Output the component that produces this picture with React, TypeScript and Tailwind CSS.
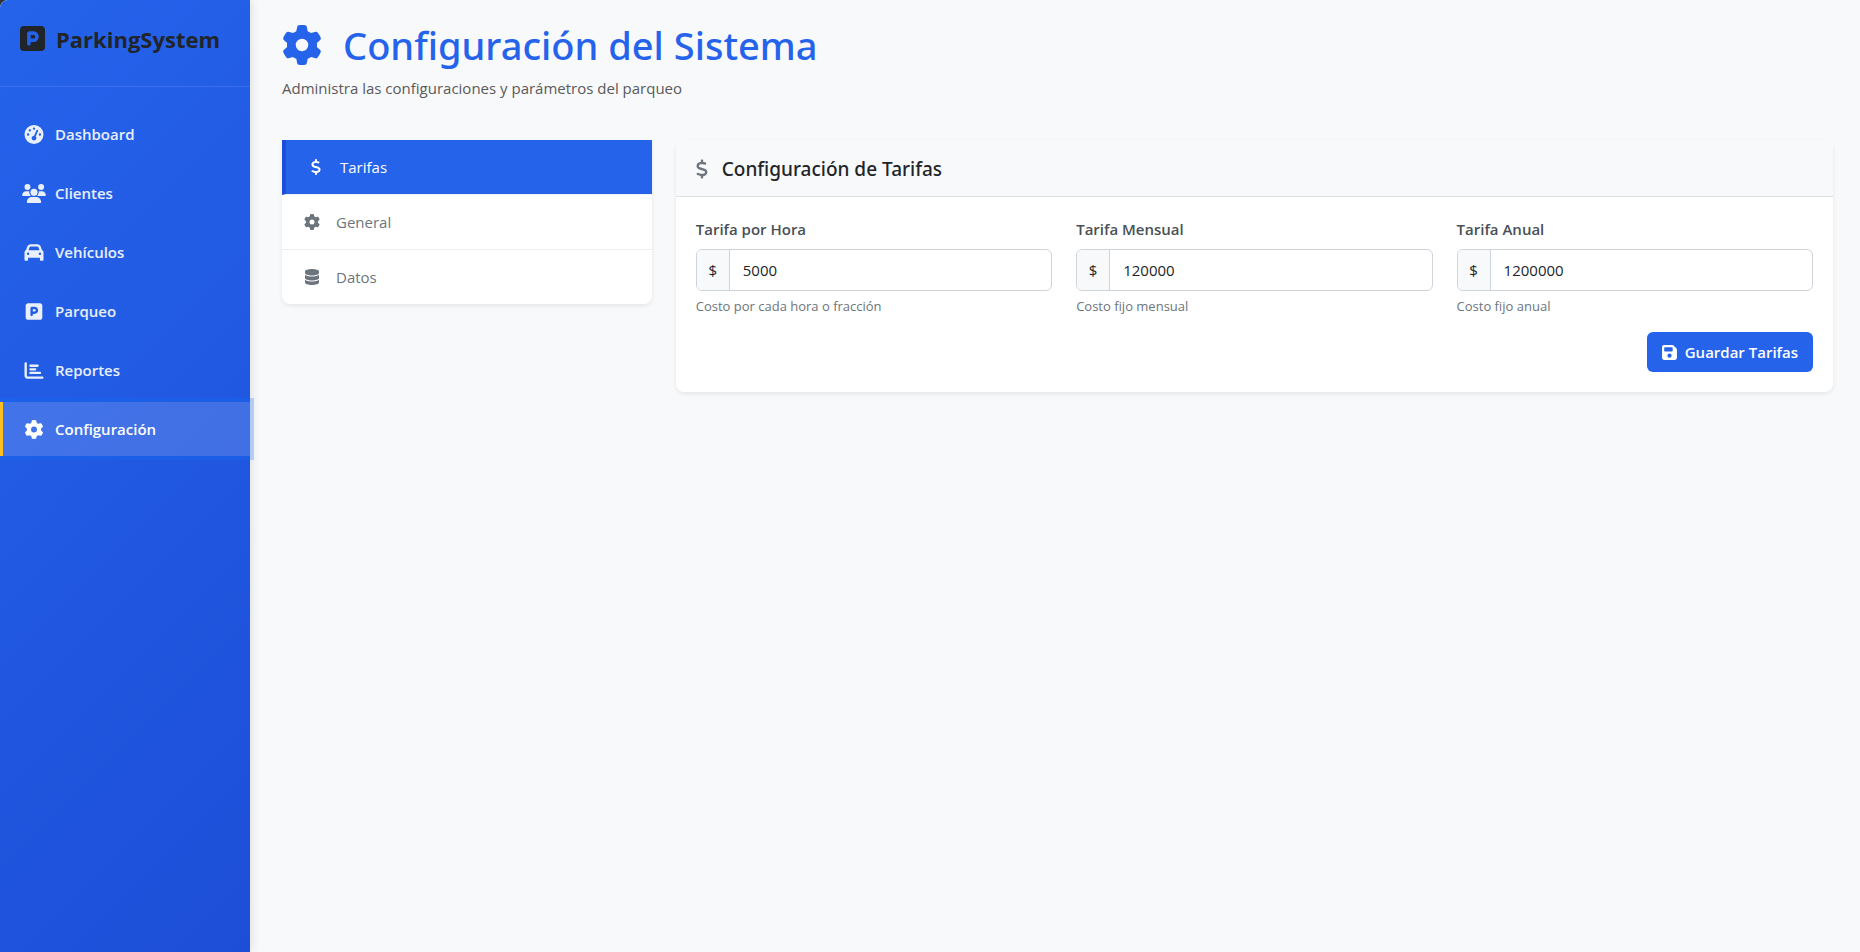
import React from "react";
import {
  FaCar,
  FaChartBar,
  FaDatabase,
  FaDollarSign,
  FaFloppyDisk,
  FaGaugeHigh,
  FaGear,
  FaSquareParking,
  FaUsers,
} from "react-icons/fa6";
import type { IconType } from "react-icons";

type NavItem = { label: string; icon: IconType; active?: boolean };

const navItems: NavItem[] = [
  { label: "Dashboard", icon: FaGaugeHigh },
  { label: "Clientes", icon: FaUsers },
  { label: "Vehículos", icon: FaCar },
  { label: "Parqueo", icon: FaSquareParking },
  { label: "Reportes", icon: FaChartBar },
  { label: "Configuración", icon: FaGear, active: true },
];

const sections: NavItem[] = [
  { label: "Tarifas", icon: FaDollarSign, active: true },
  { label: "General", icon: FaGear },
  { label: "Datos", icon: FaDatabase },
];

const rates = [
  { id: "hora", label: "Tarifa por Hora", value: "5000", help: "Costo por cada hora o fracción" },
  { id: "mensual", label: "Tarifa Mensual", value: "120000", help: "Costo fijo mensual" },
  { id: "anual", label: "Tarifa Anual", value: "1200000", help: "Costo fijo anual" },
];

function Sidebar() {
  return (
    <aside className="relative z-10 w-[250px] shrink-0 rounded-tl-lg bg-linear-[135deg,#2563eb,#1d4ed8] shadow-[2px_0_10px_rgba(0,0,0,0.1)]">
      <div className="flex h-[87px] items-start gap-[11px] border-b border-white/10 px-5 pt-6 text-[#212529]">
        <FaSquareParking className="h-[29px] w-[25px] shrink-0" aria-hidden="true" />
        <span className="text-[22px] leading-[30px] font-bold">ParkingSystem</span>
      </div>
      <nav className="flex flex-col gap-[5px] pt-5">
        {navItems.map(({ label, icon: Icon, active }) => (
          <a
            key={label}
            href="#"
            aria-current={active ? "page" : undefined}
            className={
              active
                ? "flex h-[54px] items-center gap-[9px] border-l-[3px] border-[#fbbf24] bg-white/15 pl-[18px] text-[15px] font-semibold text-white shadow-[0_0_0_4px_rgba(13,110,253,0.25)]"
                : "flex h-[54px] items-center gap-[9px] border-l-[3px] border-transparent pl-[18px] text-[15px] font-semibold text-white/90"
            }
          >
            <span className="flex w-[25px] shrink-0 justify-center">
              <Icon className="h-[19px] w-6" aria-hidden="true" />
            </span>
            {label}
          </a>
        ))}
      </nav>
    </aside>
  );
}

function SectionMenu() {
  return (
    <nav className="self-start rounded-b-lg bg-white shadow-[0_2px_4px_rgba(0,0,0,0.08)]">
      {sections.map(({ label, icon: Icon, active }) => (
        <a
          key={label}
          href="#"
          aria-current={active ? "true" : undefined}
          className={
            active
              ? "flex h-[55px] items-center gap-[14px] border-b border-l-4 border-b-[#f1f1f1] border-l-[#1d4ed8] bg-[#2563eb] bg-clip-padding pl-5 text-[15px] text-white"
              : "flex h-[55px] items-center gap-[14px] border-b border-[#eeeeee] pl-5 text-[15px] text-[#6c757d] last:h-[54px] last:border-b-0"
          }
        >
          <span className="flex w-5 shrink-0 justify-center">
            <Icon className="h-4 w-5" aria-hidden="true" />
          </span>
          {label}
        </a>
      ))}
    </nav>
  );
}

function RatesCard() {
  return (
    <section className="col-span-3 rounded-lg bg-white shadow-[0_2px_4px_rgba(0,0,0,0.08)]">
      <header className="flex h-[57px] items-center gap-[14px] rounded-t-lg border-b border-[#dee2e6] bg-[#f8f9fb] px-5 pt-0.5">
        <FaDollarSign className="h-5 w-3 shrink-0 text-[#6c757d]" aria-hidden="true" />
        <h2 className="font-['Noto_Sans','Open_Sans',sans-serif] text-[19px] leading-6 font-medium text-[#212529]">
          Configuración de Tarifas
        </h2>
      </header>
      <form className="p-5" onSubmit={(e) => e.preventDefault()}>
        <div className="grid grid-cols-3 gap-6">
          {rates.map((rate) => (
            <div key={rate.id}>
              <label htmlFor={rate.id} className="block text-[15px] leading-6 font-semibold text-[#495057]">
                {rate.label}
              </label>
              <div className="mt-2 flex h-[42px] overflow-hidden rounded-md border border-[#ced4da] bg-white">
                <span className="flex w-[33px] shrink-0 items-center justify-center border-r border-[#ced4da] bg-[#f8f9fb] text-[15px] text-[#212529]">
                  $
                </span>
                <input
                  id={rate.id}
                  type="text"
                  inputMode="numeric"
                  defaultValue={rate.value}
                  aria-describedby={`${rate.id}-ayuda`}
                  className="min-w-0 flex-1 px-[13px] text-[15px] text-[#212529] outline-none"
                />
              </div>
              <p id={`${rate.id}-ayuda`} className="mt-[5px] text-[13px] leading-5 text-[#6c757d]">
                {rate.help}
              </p>
            </div>
          ))}
        </div>
        <div className="mt-4 flex justify-end">
          <button
            type="submit"
            className="flex h-10 items-center gap-2 rounded-md bg-[#2563eb] px-[15px] text-[15px] font-semibold text-white"
          >
            <FaFloppyDisk className="h-[17px] w-[15px]" aria-hidden="true" />
            Guardar Tarifas
          </button>
        </div>
      </form>
    </section>
  );
}

export default function App() {
  return (
    <div className="bg-[#333333]">
      <div className="flex min-h-screen rounded-tl-lg bg-[#f8f9fb] font-['Open_Sans','Noto_Sans',sans-serif]">
        <Sidebar />
        <main className="min-w-0 flex-1 pt-5 pr-[27px] pl-8">
          <h1 className="flex items-center gap-[21px] font-['Noto_Sans','Open_Sans',sans-serif] text-[38px] leading-[50px] font-medium text-[#2563eb]">
            <FaGear className="size-10 shrink-0" aria-hidden="true" />
            Configuración del Sistema
          </h1>
          <p className="mt-[6px] text-[15px] leading-6 text-[#5a5a5a]">
            Administra las configuraciones y parámetros del parqueo
          </p>
          <div className="mt-10 grid grid-cols-4 gap-6">
            <SectionMenu />
            <RatesCard />
          </div>
        </main>
      </div>
    </div>
  );
}
